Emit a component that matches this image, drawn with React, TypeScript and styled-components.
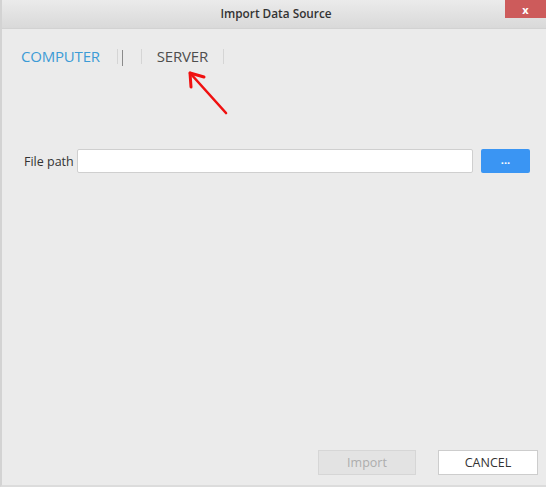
import styled, { createGlobalStyle } from "styled-components";

const GlobalStyle = createGlobalStyle`
  html, body {
    margin: 0;
    padding: 0;
    background: #ebebeb;
  }
  body {
    font-family: "Open Sans", "Noto Sans", "Liberation Sans", sans-serif;
  }
`;

const Window = styled.div`
  position: relative;
  width: 546px;
  height: 487px;
  box-sizing: border-box;
  display: flex;
  flex-direction: column;
  background: #ebebeb;
  border-left: 2px solid #d3d3d3;
  border-bottom: 2px solid #dcdcdc;
`;

const TitleBar = styled.div`
  height: 29px;
  display: grid;
  grid-template-columns: 1fr auto 1fr;
  background: linear-gradient(#ebebeb, #d9d9d9);
  border-bottom: 1px solid #d2d2d2;
  box-sizing: border-box;
`;

const Title = styled.div`
  grid-column: 2;
  align-self: center;
  margin-top: -2px;
  margin-right: -4px;
  font-size: 11.8px;
  font-weight: 600;
  color: #333;
`;

const CloseButton = styled.div`
  grid-column: 3;
  justify-self: end;
  width: 41px;
  height: 18px;
  background: #cd5b5b;
  color: #fff;
  font-size: 11px;
  font-weight: 700;
  display: flex;
  align-items: center;
  justify-content: center;
`;

const TabBar = styled.div`
  display: flex;
  align-items: center;
  height: 28px;
  margin-top: 13px;
  padding-left: 19px;
`;

const Tab = styled.div<{ $active?: boolean; $ml?: number }>`
  font-size: 15px;
  font-weight: 400;
  letter-spacing: -0.2px;
  margin-left: ${(p) => p.$ml ?? 0}px;
  color: ${(p) => (p.$active ? "#3c9bd6" : "#4e4e4e")};
`;

const Faint = styled.span<{ $ml: number }>`
  display: inline-block;
  width: 1px;
  height: 15px;
  background: #d5d5d5;
  margin-left: ${(p) => p.$ml}px;
`;

const Pipe = styled.span<{ $ml: number }>`
  display: inline-block;
  width: 1px;
  height: 16px;
  margin-top: 3px;
  background: #8a8a8a;
  margin-left: ${(p) => p.$ml}px;
`;

const FileRow = styled.div`
  display: flex;
  align-items: center;
  margin-top: 79px;
  padding-left: 22px;
`;

const Label = styled.label`
  font-size: 12.5px;
  color: #333;
  width: 53px;
`;

const PathInput = styled.div`
  width: 396px;
  height: 24px;
  box-sizing: border-box;
  background: #fff;
  border: 1px solid #cfcfcf;
  border-radius: 2px;
`;

const BrowseButton = styled.div`
  width: 49px;
  height: 24px;
  margin-left: 8px;
  border-radius: 2px;
  background: #3a95f3;
  color: #fff;
  font-size: 11px;
  font-weight: 700;
  display: flex;
  align-items: center;
  justify-content: center;
  padding-bottom: 3px;
  box-sizing: border-box;
`;

const Footer = styled.div`
  margin-top: auto;
  display: flex;
  justify-content: flex-end;
  gap: 22px;
  padding: 0 8px 10px 0;
`;

const FooterButton = styled.div<{ $disabled?: boolean }>`
  width: ${(p) => (p.$disabled ? 98 : 100)}px;
  height: 25px;
  box-sizing: border-box;
  display: flex;
  align-items: center;
  justify-content: center;
  font-size: 12.5px;
  background: ${(p) => (p.$disabled ? "#e3e3e3" : "#fff")};
  border: 1px solid ${(p) => (p.$disabled ? "#d6d6d6" : "#cdcdcd")};
  color: ${(p) => (p.$disabled ? "#adadad" : "#333")};
`;

const Arrow = styled.svg`
  position: absolute;
  left: 183px;
  top: 68px;
`;

export default function App() {
  return (
    <>
      <GlobalStyle />
      <Window>
        <TitleBar>
          <Title>Import Data Source</Title>
          <CloseButton>x</CloseButton>
        </TitleBar>
        <TabBar>
          <Tab $active>COMPUTER</Tab>
          <Faint $ml={17} />
          <Pipe $ml={4} />
          <Faint $ml={18} />
          <Tab $ml={15}>SERVER</Tab>
          <Faint $ml={15} />
        </TabBar>
        <FileRow>
          <Label>File path</Label>
          <PathInput />
          <BrowseButton>...</BrowseButton>
        </FileRow>
        <Footer>
          <FooterButton $disabled>Import</FooterButton>
          <FooterButton>CANCEL</FooterButton>
        </Footer>
        <Arrow width="46" height="50" viewBox="0 0 46 50">
          <path d="M41 45 L5 5" stroke="#f01010" strokeWidth="2.6" strokeLinecap="round" />
          <path d="M5 5 L6 19 M5 5 L19 9" stroke="#f01010" strokeWidth="3" strokeLinecap="round" fill="none" />
        </Arrow>
      </Window>
    </>
  );
}
